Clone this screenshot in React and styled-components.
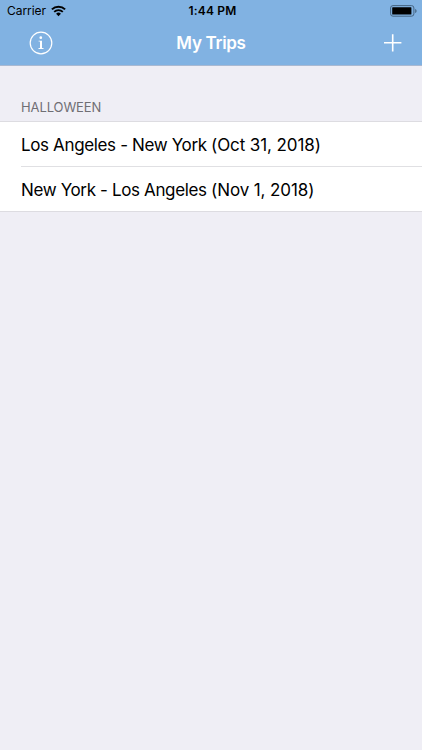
import React from "react";
import styled, { createGlobalStyle } from "styled-components";

const sections = [
  {
    title: "Halloween",
    trips: [
      { route: "Los Angeles - New York", date: "Oct 31, 2018" },
      { route: "New York - Los Angeles", date: "Nov 1, 2018" },
    ],
  },
];

const WifiIcon = () => (
  <svg width="15" height="12" viewBox="0 0 15 12" fill="none">
    <path d="M.9 4.4a9.4 9.4 0 0 1 13.2 0" stroke="#000" strokeWidth="2" />
    <path d="M3.2 6.8a6.1 6.1 0 0 1 8.6 0" stroke="#000" strokeWidth="1.8" />
    <path d="M7.5 11.2L5.1 8.8a3.4 3.4 0 0 1 4.8 0z" fill="#000" />
  </svg>
);

const BatteryIcon = () => (
  <svg width="28" height="12" viewBox="0 0 28 12">
    <rect x="0.6" y="0.6" width="23.3" height="10.6" rx="2.4" fill="none" stroke="#456482" strokeWidth="1" />
    <rect x="2.2" y="2.2" width="19.2" height="7.4" rx="0.6" fill="#000" />
    <path d="M25.2 4v4c1.8-.5 1.8-3.5 0-4z" fill="#456482" />
  </svg>
);

const InfoIcon = () => (
  <svg width="24" height="24" viewBox="0 0 24 24" fill="none">
    <circle cx="12" cy="12" r="10.8" stroke="#fff" strokeWidth="1.2" />
    <circle cx="11.8" cy="6.7" r="1.35" fill="#fff" />
    <path d="M9.6 9.7h3.4v7.4h1.5v.9H9.5v-.9H11v-6.5H9.6z" fill="#fff" />
  </svg>
);

const PlusIcon = () => (
  <svg width="18" height="18" viewBox="0 0 18 18" fill="none">
    <path d="M8.7 .2v17.4M0 8.8h17.4" stroke="#fff" strokeWidth="1.6" />
  </svg>
);

const App = () => {
  return (
    <>
      <GlobalStyle />
      <Screen>
        <Header>
          <StatusBar>
            <Carrier>
              <span>Carrier</span>
              <WifiIcon />
            </Carrier>
            <Clock>1:44 PM</Clock>
            <Battery>
              <BatteryIcon />
            </Battery>
          </StatusBar>
          <NavBar>
            <NavButton aria-label="Info">
              <InfoIcon />
            </NavButton>
            <Title>My Trips</Title>
            <NavButton aria-label="Add trip" $end>
              <PlusIcon />
            </NavButton>
          </NavBar>
        </Header>
        {sections.map((section) => (
          <section key={section.title}>
            <SectionTitle>{section.title}</SectionTitle>
            <TripList>
              {section.trips.map((trip) => (
                <TripRow key={trip.route}>
                  {trip.route} <TripDate>({trip.date})</TripDate>
                </TripRow>
              ))}
            </TripList>
          </section>
        ))}
      </Screen>
    </>
  );
};

const GlobalStyle = createGlobalStyle`
  * {
    margin: 0;
    padding: 0;
    box-sizing: border-box;
  }
  body {
    background-color: #efeef5;
    font-family: Inter, "Liberation Sans", sans-serif;
  }
`;

const Screen = styled.main`
  min-height: 750px;
  background-color: #efeef5;
  color: #000;
`;

const Header = styled.header`
  height: 66px;
  background-color: #81b2e2;
  border-bottom: 1px solid #a9b9d2;
`;

const StatusBar = styled.div`
  display: grid;
  grid-template-columns: 1fr auto 1fr;
  align-items: center;
  height: 21px;
  padding: 0 4px 0 7px;
`;

const Carrier = styled.div`
  display: flex;
  align-items: center;
  gap: 5px;
  font-size: 12px;
  line-height: 21px;
  letter-spacing: -0.05px;
`;

const Clock = styled.time`
  font-size: 12px;
  font-weight: 600;
  line-height: 21px;
  letter-spacing: 0.2px;
`;

const Battery = styled.div`
  display: flex;
  justify-content: flex-end;
`;

const NavBar = styled.nav`
  display: grid;
  grid-template-columns: 1fr auto 1fr;
  align-items: center;
  height: 44px;
  padding: 0 20px 0 29px;
`;

const NavButton = styled.button`
  display: flex;
  justify-self: ${({ $end }) => ($end ? "end" : "start")};
  border: none;
  background: none;
`;

const Title = styled.h1`
  margin-right: 9px;
  color: #fff;
  font-size: 17px;
  font-weight: 600;
  line-height: 44px;
  letter-spacing: -0.3px;
`;

const SectionTitle = styled.h2`
  height: 55px;
  padding: 31px 21px 0;
  color: #6f6f74;
  font-size: 13px;
  font-weight: 400;
  line-height: 20px;
  letter-spacing: -0.1px;
  text-transform: uppercase;
`;

const TripList = styled.ul`
  list-style: none;
  padding-left: 21px;
  background-color: #fff;
  border-top: 1px solid #dddce1;
  border-bottom: 1px solid #dddce1;
`;

const TripRow = styled.li`
  height: 44px;
  padding-top: 1px;
  font-size: 17px;
  line-height: 44px;
  letter-spacing: -0.36px;
  white-space: nowrap;

  & + & {
    height: 45px;
    border-top: 1px solid #e0e0e3;
  }
`;

const TripDate = styled.time`
  letter-spacing: -0.1px;
`;

export default App;
